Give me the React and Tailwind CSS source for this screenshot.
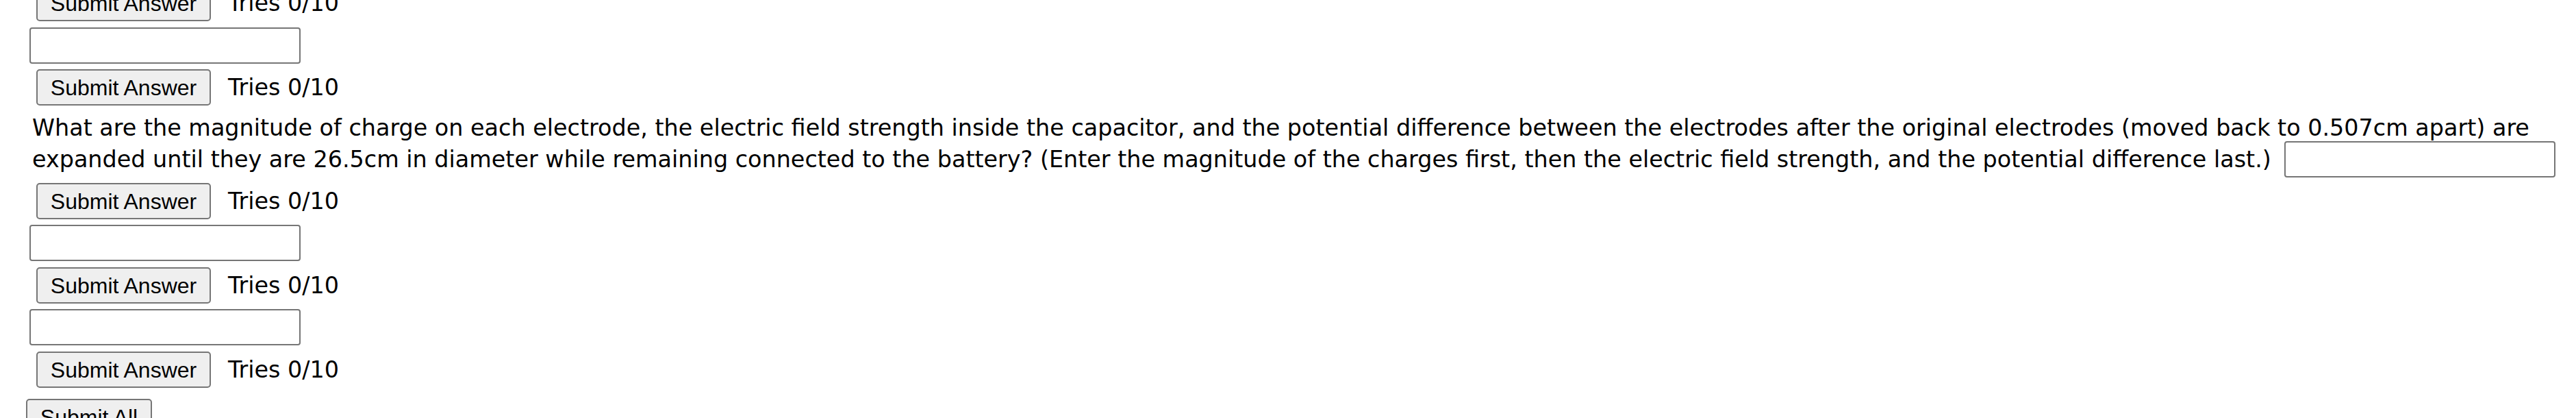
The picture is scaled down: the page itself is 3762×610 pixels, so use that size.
import React from "react";

const question =
  "What are the magnitude of charge on each electrode, the electric field strength inside the capacitor, and the potential difference between the electrodes after the original electrodes (moved back to 0.507cm apart) are";
const questionEnd =
  "expanded until they are 26.5cm in diameter while remaining connected to the battery? (Enter the magnitude of the charges first, then the electric field strength, and the potential difference last.)";

function SubmitRow({ className = "" }) {
  return (
    <div className={`flex items-center ml-[15px] h-[53px] ${className}`}>
      <button
        type="button"
        className="h-[53px] w-[255px] shrink-0 rounded-[5px] border-2 border-[#767676] bg-[#efefef] text-[32px] leading-none text-black font-['Liberation_Sans',Arial,sans-serif]"
      >
        Submit Answer
      </button>
      <span className="ml-[25px] text-[33.4px] leading-none text-black font-['DejaVu_Sans',Verdana,sans-serif]">
        Tries 0/10
      </span>
    </div>
  );
}

function AnswerBox({ className = "" }) {
  return (
    <input
      type="text"
      className={`block h-[53px] w-[396px] shrink-0 rounded-[4px] border-2 border-[#767676] bg-white px-1 text-[32px] outline-none ${className}`}
    />
  );
}

export default function App() {
  return (
    <div className="h-[610px] w-[3762px] overflow-hidden bg-white pl-[38px] text-black">
      <div className="flex flex-col items-start">
        <SubmitRow className="-mt-[22px]" />
        <AnswerBox className="ml-[5px] mt-[9px]" />
        <SubmitRow className="mt-[8px]" />

        <div className="ml-[9px] mt-[14px] font-['DejaVu_Sans',Verdana,sans-serif] text-[33.4px] text-black">
          <div className="h-[38px] whitespace-nowrap leading-[38px]">{question}</div>
          <div className="flex h-[53px] items-center whitespace-nowrap">
            <span className="leading-[38px]">{questionEnd}</span>
            <AnswerBox className="ml-[19px]" />
          </div>
        </div>

        <SubmitRow className="mt-[8px]" />
        <AnswerBox className="ml-[5px] mt-[8px]" />
        <SubmitRow className="mt-[9px]" />
        <AnswerBox className="ml-[5px] mt-[8px]" />
        <SubmitRow className="mt-[9px]" />

        <button
          type="button"
          className="mt-[16px] h-[53px] w-[184px] rounded-[5px] border-2 border-[#767676] bg-[#efefef] text-[32px] leading-none text-black font-['Liberation_Sans',Arial,sans-serif]"
        >
          Submit All
        </button>
      </div>
    </div>
  );
}
